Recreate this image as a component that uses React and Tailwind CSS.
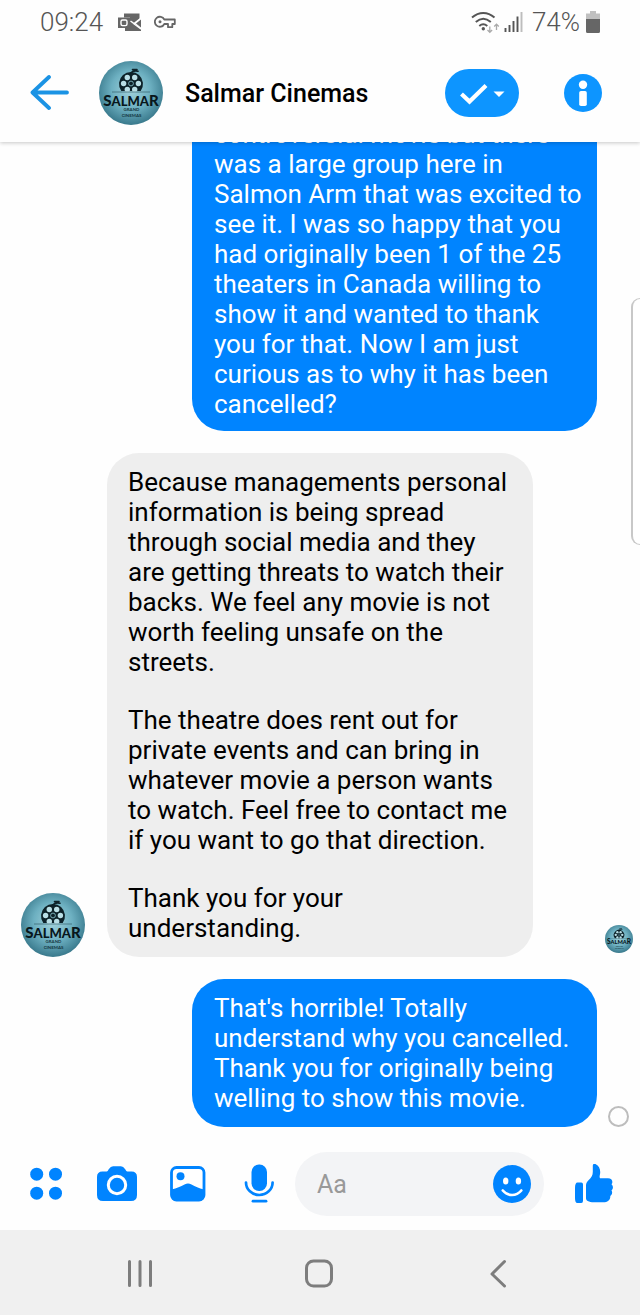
import React from "react";

const outgoing = "bg-[#0084ff] text-white w-[405px] pl-[22px] pr-[14px] text-[26px] leading-[30px]";

function SalmarLogo({ className }) {
  const holes = [0, 60, 120, 180, 240, 300];
  return (
    <svg viewBox="0 0 64 64" className={className} role="img" aria-label="Salmar Grand Cinemas">
      <defs>
        <radialGradient id="salmarGlow" cx="50%" cy="45%" r="55%">
          <stop offset="0" stopColor="#a4d3dc" />
          <stop offset="0.55" stopColor="#6db0c1" />
          <stop offset="1" stopColor="#39798c" />
        </radialGradient>
      </defs>
      <circle cx="32" cy="32" r="32" fill="url(#salmarGlow)" />
      <path d="M22.300 30a12 12 0 1 1 19.400 0z" fill="#0d2229" />
      <path d="M32 12c1.500-2.200 3.500-2.600 7-1.800M33.500 8.500h4.500" fill="none" stroke="#0d2229" strokeWidth="1.600" strokeLinecap="round" />
      {holes.map((a) => (
        <circle
          key={a}
          cx={32 + 7.4 * Math.cos((a * Math.PI) / 180)}
          cy={22.5 + 7 * Math.sin((a * Math.PI) / 180)}
          r="2.700"
          fill="#b9dfe6"
        />
      ))}
      <circle cx="32" cy="22.500" r="2.400" fill="none" stroke="#7fb5c0" strokeWidth="0.900" />
      <path d="M13 31h38" stroke="#335f6c" strokeWidth="0.700" />
      <text x="32" y="44.500" textAnchor="middle" fontFamily="Lato, sans-serif" fontWeight="900" fontSize="13" fill="#08171c">
        <tspan fontSize="15">S</tspan>ALMA<tspan fontSize="15">R</tspan>
      </text>
      <text x="32.500" y="50.300" textAnchor="middle" fontFamily="Lato, sans-serif" fontWeight="700" fontSize="4.400" fill="#143640">
        GRAND
      </text>
      <text x="32.500" y="55.600" textAnchor="middle" fontFamily="Lato, sans-serif" fontWeight="700" fontSize="4.400" fill="#143640">
        CINEMAS
      </text>
    </svg>
  );
}

function StatusBar() {
  return (
    <div className="relative z-20 flex h-11 shrink-0 items-center justify-between bg-[#fefefe] px-10 text-[26px] leading-[30px] font-light text-[#555555]">
      <div className="flex items-center">
        <span>09:24</span>
        <svg viewBox="0 0 24 19" className="ml-[15px] h-[19px] w-6" fill="#666">
          <path d="M6 0.500h15.500v5.500l-5 4.500 6.500 6V18H7v-3h5V4.500H6z" />
          <path d="M12.500 8l3.500 2.600L22.500 5.500M15.500 10.500l7.500 5.500" stroke="#fff" strokeWidth="1.500" fill="none" />
          <path d="M23 6.500v8l-5-4z" />
          <rect x="0" y="4.500" width="12" height="10.500" />
          <rect x="3" y="7" width="6" height="5.600" rx="1.500" fill="none" stroke="#fff" strokeWidth="1.400" />
          <circle cx="6" cy="9.800" r="1.100" />
        </svg>
        <svg viewBox="0 0 22 14" className="ml-3 h-[14px] w-[22px]" fill="none" stroke="#666" strokeWidth="1.800" strokeLinejoin="round">
          <path d="M10.300 4.500a5 5 0 1 0 0 4.500H14v3.200h4.300V9H20.800V4.500z" />
          <circle cx="6" cy="6.800" r="1.500" fill="#666" stroke="none" />
        </svg>
      </div>
      <div className="flex items-center">
        <svg viewBox="0 0 29 23" className="h-[23px] w-[29px]" fill="none">
          <path d="M1 6.500c7-6 15.500-6 22.500 0M4.800 11c4.700-4.200 10.200-4.200 15 0M8.300 15c2.500-2.200 5.400-2.200 8 0" stroke="#555" strokeWidth="2" />
          <circle cx="12.300" cy="17.800" r="1.700" fill="#555" />
          <path d="M18.800 15.500v5.500m-2.300-2l2.300 2.300 2.300-2.300M25.500 19v-5.500m-2.300 2l2.300-2.300 2.300 2.300" stroke="#aaa" strokeWidth="1.300" />
        </svg>
        <svg viewBox="0 0 19 20" className="ml-1 h-5 w-[19px]">
          <path d="M1.500 20v-4M5.500 20v-7M9.500 20v-11M13.500 20V4.500" stroke="#555" strokeWidth="1.900" />
          <path d="M17.500 20V0" stroke="#bdbdbd" strokeWidth="1.900" />
        </svg>
        <span className="ml-[9px]">74%</span>
        <svg viewBox="0 0 14 22" className="ml-[6px] h-[22px] w-[14px]">
          <path d="M4 0h6v2.500h4V9H0V2.500h4z" fill="#c0c0c0" />
          <path d="M0 8h14v12.500a1.500 1.500 0 0 1-1.500 1.500h-11A1.500 1.500 0 0 1 0 20.500z" fill="#666" />
        </svg>
      </div>
    </div>
  );
}

function ChatHeader() {
  return (
    <header className="z-10 flex h-[98px] shrink-0 items-center bg-[#fefefe] pl-[30px] pr-[38px] shadow-[0_1px_4px_rgba(0,0,0,0.22)]">
      <button aria-label="Back" className="h-9 w-10">
        <svg viewBox="0 0 40 36" className="h-9 w-10" fill="none" stroke="#1b93e4" strokeWidth="3.800" strokeLinecap="round" strokeLinejoin="round">
          <path d="M37 17.500H3M19 2L2.500 17.500 19 33" />
        </svg>
      </button>
      <SalmarLogo className="ml-[29px] size-16 shrink-0" />
      <h1 className="ml-[22px] flex-1 whitespace-nowrap pt-[2px] text-[25px] font-medium leading-[30px] text-black">Salmar Cinemas</h1>
      <button aria-label="Mark as done" className="flex h-12 w-[74px] items-center justify-center rounded-full bg-[#0d95ff]">
        <svg viewBox="0 0 74 48" className="h-12 w-[74px]">
          <path d="M16.500 25l8 7.500L41 16.500" fill="none" stroke="#fff" strokeWidth="4.200" />
          <path d="M48.500 22.500h11l-5.500 5.500z" fill="#fff" />
        </svg>
      </button>
      <button aria-label="Conversation info" className="ml-[45px] size-[38px]">
        <svg viewBox="0 0 38 38" className="size-[38px]">
          <circle cx="19" cy="19" r="19" fill="#0d95ff" />
          <circle cx="19" cy="10.700" r="4.200" fill="#fff" />
          <rect x="15.200" y="17" width="7.600" height="15" rx="1.800" fill="#fff" />
        </svg>
      </button>
    </header>
  );
}

function Messages() {
  return (
    <main className="flex min-h-0 flex-1 flex-col justify-end gap-[22px] overflow-hidden pb-[11px]">
      <div className="flex shrink-0 justify-end pr-[43px]">
        <p className={`${outgoing} rounded-b-[32px] pb-3`}>
          controversial movie but there was a large group here in Salmon Arm that was excited to see it. I was so happy that
          you had originally been 1 of the 25 theaters in Canada willing to show it and wanted to thank you for that. Now I
          am just curious as to why it has been cancelled?
        </p>
      </div>
      <div className="flex shrink-0 items-end pl-[21px] pr-[7px]">
        <SalmarLogo className="size-16 shrink-0" />
        <div className="ml-[22px] flex w-[426px] flex-col gap-7 rounded-[32px] bg-[#eeeeee] py-[14px] pl-[21px] pr-[22px] text-[26px] leading-[30px] text-black">
          <p>
            Because managements personal information is being spread through social media and they are getting threats to
            watch their backs. We feel any movie is not worth feeling unsafe on the streets.
          </p>
          <p>
            The theatre does rent out for private events and can bring in whatever movie a person wants to watch. Feel free
            to contact me if you want to go that direction.
          </p>
          <p>Thank you for your understanding.</p>
        </div>
        <SalmarLogo className="mb-1 ml-auto size-7 shrink-0" />
      </div>
      <div className="flex shrink-0 items-end justify-end pr-[11px]">
        <p className={`${outgoing} rounded-[32px] py-[14px]`}>
          That's horrible! Totally understand why you cancelled. Thank you for originally being welling to show this movie.
        </p>
        <span role="status" aria-label="Sending" className="ml-[11px] size-[21px] rounded-full border-2 border-[#bdbdbd]" />
      </div>
    </main>
  );
}

function Composer() {
  const icon = "size-10";
  return (
    <form className="flex shrink-0 items-center bg-[#fefefe] py-[14px] pl-[26px] pr-[27px]" onSubmit={(e) => e.preventDefault()}>
      <div className="flex gap-[31px]">
        <button type="button" aria-label="More apps">
          <svg viewBox="0 0 40 40" className={icon} fill="#0084ff">
            <circle cx="10.700" cy="10.200" r="6.500" />
            <circle cx="29.500" cy="10.200" r="6.500" />
            <circle cx="10.700" cy="29.200" r="6.500" />
            <circle cx="29.500" cy="29.200" r="6.500" />
          </svg>
        </button>
        <button type="button" aria-label="Camera">
          <svg viewBox="0 0 40 40" className={icon}>
            <path d="M11 6.500c2-3.500 3.500-4.300 6-4.300h6c2.500 0 4 .8 6 4.300.4.700 1 1 2 1h3.500Q40 7.500 40 13v18q0 6-6 6H6q-6 0-6-6V13q0-5.500 5.500-5.500H9c1 0 1.600-.3 2-1z" fill="#0084ff" />
            <circle cx="20" cy="21" r="8.700" fill="#0084ff" stroke="#fff" strokeWidth="3" />
          </svg>
        </button>
        <button type="button" aria-label="Photos">
          <svg viewBox="0 0 40 40" className={icon}>
            <rect x="3.500" y="3.500" width="32.500" height="32.500" rx="5" fill="#fff" stroke="#0084ff" strokeWidth="2.800" />
            <path d="M3.500 25.500c5.500-1.200 9-3 13-5 2.500-1.200 4.500-1.200 7 0 4 2 7 3.800 12.500 5v7q0 4-4 4H7.500q-4 0-4-4z" fill="#0084ff" />
            <circle cx="12.500" cy="12.300" r="4" fill="#0084ff" />
          </svg>
        </button>
        <button type="button" aria-label="Voice message">
          <svg viewBox="0 0 40 40" className={icon}>
            <rect x="12.500" y="0.500" width="15.500" height="26.500" rx="7.500" fill="#0084ff" />
            <path d="M7 18.500a13.300 12.500 0 0 0 26.600 0" fill="none" stroke="#0084ff" strokeWidth="2.700" strokeLinecap="round" />
            <path d="M14 37.200h13" stroke="#0084ff" strokeWidth="2.800" strokeLinecap="round" />
          </svg>
        </button>
      </div>
      <div className="ml-4 flex h-16 min-w-0 flex-1 items-center rounded-full bg-[#f3f4f6] pl-[22px] pr-[13px]">
        <input aria-label="Message" placeholder="Aa" className="min-w-0 flex-1 bg-transparent pt-[2px] text-[25px] leading-[30px] outline-none placeholder:text-[#999999]" />
        <button type="button" aria-label="Emoji">
          <svg viewBox="0 0 38 38" className="size-[38px]">
            <circle cx="19" cy="19" r="19" fill="#0084ff" />
            <ellipse cx="12.700" cy="16" rx="2.700" ry="3.600" fill="#fff" />
            <ellipse cx="25.400" cy="16" rx="2.700" ry="3.600" fill="#fff" />
            <path d="M9.800 25.500c5 6 13.500 6 18.500 0" fill="none" stroke="#fff" strokeWidth="2.600" strokeLinecap="round" />
          </svg>
        </button>
      </div>
      <button type="button" aria-label="Send like" className="ml-[31px]">
        <svg viewBox="0 0 38 40" className="h-10 w-[38px]" fill="#0084ff">
          <path d="M2.500 18.500h3.800q1.700 0 1.700 2v16.500q0 2-1.700 2h-4Q0 39 0 34v-10q0-5.500 2.500-5.500z" />
          <path d="M17.800 1.800c0-2 1.500-2.300 3-1.600 3.500 1.600 5.300 5.800 4 11-.3 1.500-.3 3 .7 3.100H33c4 0 5.500 3.500 3.500 6 2 2 1.800 4.500 0 6 1.300 2.300.5 4.500-1.200 5.600.3 3.700-2.800 6.400-7 6.400H19c-3 0-4.500-.4-6.300-1.300-1.200-.6-1.700-1.400-1.700-3V21.500c0-2.300.8-3.600 2.500-5.300 3-3 4.300-5 4.300-8.500z" />
        </svg>
      </button>
    </form>
  );
}

function SystemNav() {
  const icon = "h-8 w-8";
  const stroke = { fill: "none", stroke: "#7d7d7d", strokeWidth: 3, strokeLinecap: "round", strokeLinejoin: "round" };
  return (
    <nav className="grid h-[85px] shrink-0 grid-cols-3 place-items-center bg-[#f0f0f0] px-[50px]">
      <button aria-label="Recent apps">
        <svg viewBox="0 0 32 32" className={icon} {...stroke}>
          <path d="M5.500 4.500v24M16 4.500v24M26.500 4.500v24" />
        </svg>
      </button>
      <button aria-label="Home">
        <svg viewBox="0 0 32 32" className={icon} {...stroke}>
          <rect x="2.500" y="4" width="25" height="25" rx="7" />
        </svg>
      </button>
      <button aria-label="Back to previous screen">
        <svg viewBox="0 0 32 32" className={icon} {...stroke}>
          <path d="M20.500 4.500L8 17l12.500 12" />
        </svg>
      </button>
    </nav>
  );
}

export default function App() {
  return (
    <div className="relative flex h-screen flex-col overflow-hidden bg-[#fefefe] font-[Roboto,sans-serif]">
      <StatusBar />
      <ChatHeader />
      <Messages />
      <Composer />
      <SystemNav />
      <div className="absolute right-0 top-[298px] h-[247px] w-[9px] rounded-l-[10px] border-y border-l-2 border-[#c8c8c8] bg-white" />
    </div>
  );
}
